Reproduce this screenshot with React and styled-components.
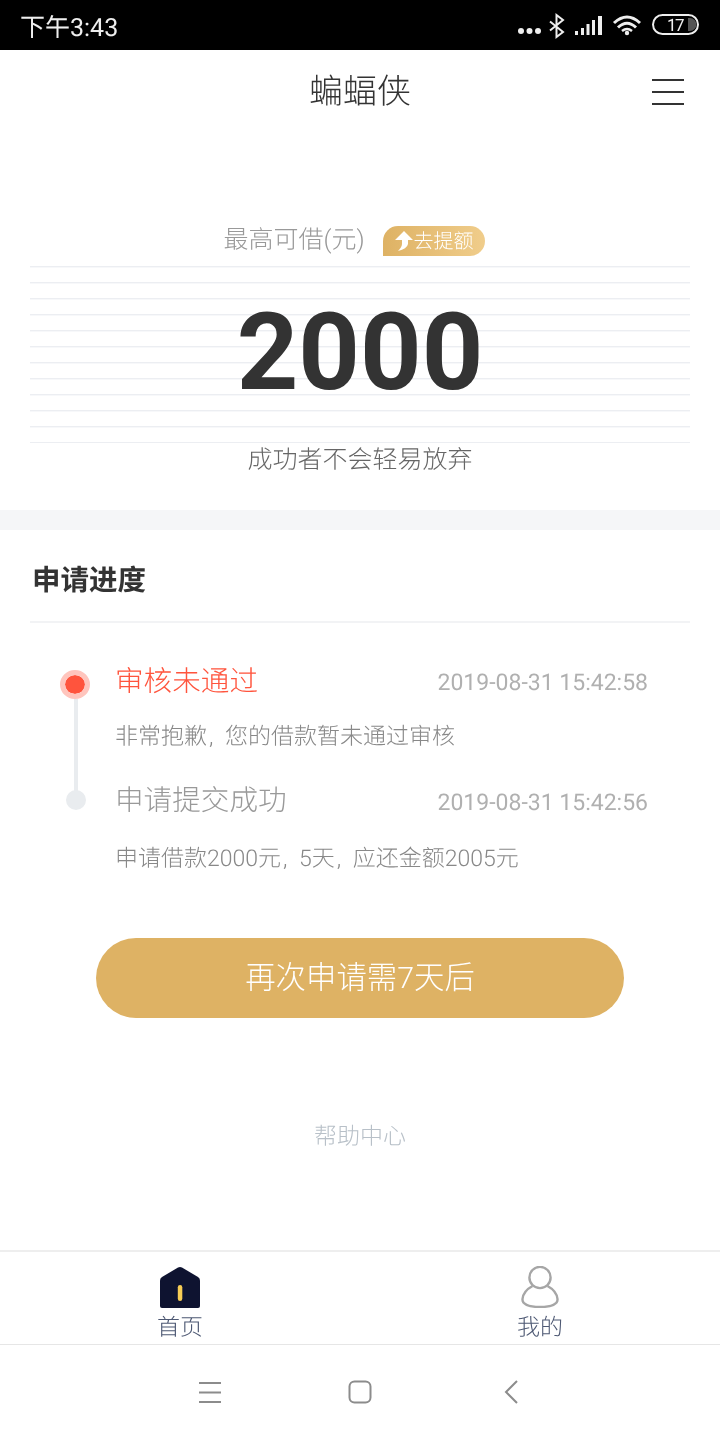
import React from "react";
import styled, { createGlobalStyle } from "styled-components";

const Global = createGlobalStyle`
  html, body { margin: 0; padding: 0; background: #fff; }
  * { box-sizing: border-box; }
  body { font-family: Roboto, "Noto Sans CJK SC", sans-serif; text-rendering: geometricPrecision; }
`;
const Page = styled.div`
  width: 720px; height: 1440px; display: flex; flex-direction: column; background: #fff; overflow: hidden; will-change: transform;
`;
const StatusBar = styled.div`
  height: 50px; background: #000; color: #eee; display: flex; align-items: center; justify-content: space-between;
  padding: 3px 6px 0 20px; flex: none;
`;
const Time = styled.span`font-size: 25px; font-weight: 400; line-height: 47px; margin-top: 3px;`;
const StatusIcons = styled.div`display: flex; align-items: center; margin-top: -3px;`;
const Header = styled.header`
  height: 80px; flex: none; position: relative; display: flex; align-items: center; justify-content: center;
`;
const Title = styled.h1`margin: 0; font-size: 34px; font-weight: 300; color: #333; line-height: 80px; padding-top: 4px;`;
const MenuButton = styled.div`
  position: absolute; right: 36px; top: 29px; width: 32px; height: 26px; display: flex; flex-direction: column; justify-content: space-between;
  span { display: block; height: 2px; background: #333; }
`;
const Hero = styled.section`
  height: 380px; flex: none; padding: 86px 30px 0; display: flex; flex-direction: column; align-items: stretch;
`;
const LabelRow = styled.div`display: flex; justify-content: center; align-items: center; height: 50px; gap: 18px; padding-right: 12px;`;
const Label = styled.span`font-size: 25px; font-weight: 300; color: #999; margin-top: -6px;`;
const Badge = styled.span`
  width: 102px; height: 30px; border-radius: 15px 15px 15px 0; background: linear-gradient(90deg, #deb264, #f0cd8b);
  color: #fff; font-size: 20px; font-weight: 300; display: flex; align-items: center; padding-left: 11px; line-height: 30px;
`;
const Lined = styled.div`
  height: 177px; display: flex; align-items: center; justify-content: center;
  background: repeating-linear-gradient(180deg, #eceef2 0, #eceef2 1px, #f7f8fa 1px, #f7f8fa 2px, #fff 2px, #fff 16px);
`;
const Amount = styled.div`
  font-size: 107.500px; font-weight: 700; color: #333; line-height: 1; font-family: Roboto, sans-serif; margin-top: -2px;
`;
const Motto = styled.div`text-align: center; font-size: 25px; font-weight: 300; color: #666; line-height: 34px; padding-top: 1px;`;
const Band = styled.div`height: 20px; background: #f5f6f8; flex: none;`;
const Section = styled.section`padding: 0 30px; flex: none;`;
const SectionTitle = styled.h2`
  margin: 0; height: 93px; line-height: 102px; padding-left: 2px; font-size: 28.500px; font-weight: 700; color: #333; border-bottom: 2px solid #f2f3f5;
`;
const Timeline = styled.div`padding: 37px 42px 0 30px; display: flex; flex-direction: column;`;
const Step = styled.div`display: flex; height: ${p => p.$h}px;`;
const Marker = styled.div`width: 55px; flex: none; display: flex; flex-direction: column; align-items: center; padding-right: 25px;`;
const Dot = styled.div`
  flex: none; border-radius: 50%; width: ${p => p.$active ? 30 : 20}px; height: ${p => p.$active ? 29 : 20}px;
  margin-top: 10px;
  ${p => p.$active
    ? "border: 5px solid #ffc5bd; background-clip: padding-box; background-color: #ff543d;"
    : "background: #e9ecef; margin-left: 2px;"}
`;
const Rail = styled.div`flex: none; width: 4px; height: 92px; background: #e9ecef; margin-left: 2px;`;
const StepBody = styled.div`flex: 1; min-width: 0; display: flex; flex-direction: column;`;
const StepHead = styled.div`display: flex; justify-content: space-between; align-items: center; height: 40px;`;
const StepTitle = styled.span`font-size: 28.600px; font-weight: 300; color: ${p => p.$active ? "#ff543d" : "#999"}; margin-top: ${p => p.$active ? -2 : -3}px;`;
const StepTime = styled.span`font-size: 23px; font-weight: 400; color: #b0b0b0; margin-top: 4px;`;
const StepDesc = styled.div`font-size: 23px; font-weight: 300; color: #888; margin-top: ${p => p.$mt}px; line-height: 32px;`;
const Comma = styled.span`display: inline-block; width: 18px; padding-left: 2px;`;
const ApplyButton = styled.button`
  display: block; width: 528px; height: 80px; margin: 40px auto 0; border: 0; border-radius: 40px; background: #deb264; color: #fff;
  font: 300 30.400px Roboto, "Noto Sans CJK SC", sans-serif; padding: 0 0 6px; flex: none;
`;
const Help = styled.div`text-align: center; font-size: 23px; font-weight: 300; color: #b8c0c8; line-height: 32px; margin-top: 103px; flex: none;`;
const Spacer = styled.div`flex: 1;`;
const TabBar = styled.nav`
  height: 95px; flex: none; display: flex; border-top: 2px solid #eeeeee; border-bottom: 1px solid #e6e6e6;
`;
const Tab = styled.div`flex: 1; display: flex; flex-direction: column; align-items: center; padding-top: 14px;`;
const TabLabel = styled.span`font-size: 23px; font-weight: 300; color: #4d5873; line-height: 32px; margin-top: 4px;`;
const SysNav = styled.div`
  height: 95px; flex: none; display: flex; align-items: center; justify-content: center; padding-bottom: 1px;
`;
const SysSlot = styled.div`width: 150.500px; display: flex; justify-content: center;`;

export default function App() {
  return (
    <Page>
      <Global />
      <StatusBar>
        <Time>下午3:43</Time>
        <StatusIcons>
          <svg width="200" height="50" viewBox="0 0 200 50">
            <g transform="translate(-514 0)" fill="#eee">
              <circle cx="521" cy="31" r="3" /><circle cx="529.500" cy="31" r="3" /><circle cx="538" cy="31" r="3" />
              <path d="M550 21.500 L563 32 L556.500 37 V15 L563 20 L550 30.500" fill="none" stroke="#eee" strokeWidth="2" />
              <path d="M575 31h3v4h-3zM581 28h3v7h-3zM586.500 24h3v11h-3zM592 20h3v15h-3zM598 16h4v19h-4z" />
              <path d="M614 23 Q627 11 640 23" fill="none" stroke="#eee" strokeWidth="3" />
              <path d="M618 27.500 Q627 19 636 27.500" fill="none" stroke="#eee" strokeWidth="3" />
              <path d="M622 31 Q627 27 632 31" fill="none" stroke="#eee" strokeWidth="2.500" />
              <circle cx="627" cy="33" r="2.200" />
              <rect x="653" y="15" width="45" height="19" rx="9.500" fill="none" stroke="#eee" strokeWidth="2" />
              <path d="M688 18h2a6.500 6.500 0 0 1 0 13h-2z" fill="#555" />
              <text x="667" y="30.500" fontSize="17" fontFamily="Roboto" fontWeight="400" letterSpacing="-1.500">17</text>
            </g>
          </svg>
        </StatusIcons>
      </StatusBar>
      <Header>
        <Title>蝙蝠侠</Title>
        <MenuButton><span /><span /><span /></MenuButton>
      </Header>
      <Hero>
        <LabelRow>
          <Label>最高可借(元)</Label>
          <Badge>
            <svg width="20" height="22" viewBox="0 0 20 22" style={{ flex: "none" }}>
              <path d="M10 1 L19 10 H14 V14 Q13 19 4 21 Q8 17 8 14 V10 H1 Z" fill="#fff" />
            </svg>
            去提额
          </Badge>
        </LabelRow>
        <Lined><Amount>2000</Amount></Lined>
        <Motto>成功者不会轻易放弃</Motto>
      </Hero>
      <Band />
      <Section>
        <SectionTitle>申请进度</SectionTitle>
        <Timeline>
          <Step $h={120}>
            <Marker><Dot $active /><Rail /></Marker>
            <StepBody>
              <StepHead><StepTitle $active>审核未通过</StepTitle><StepTime>2019-08-31 15:42:58</StepTime></StepHead>
              <StepDesc $mt={21}>非常抱歉<Comma>,</Comma>您的借款暂未通过审核</StepDesc>
            </StepBody>
          </Step>
          <Step $h={118}>
            <Marker><Dot /></Marker>
            <StepBody>
              <StepHead><StepTitle>申请提交成功</StepTitle><StepTime>2019-08-31 15:42:56</StepTime></StepHead>
              <StepDesc $mt={23}>申请借款2000元<Comma>,</Comma>5天<Comma>,</Comma>应还金额2005元</StepDesc>
            </StepBody>
          </Step>
        </Timeline>
      </Section>
      <ApplyButton>再次申请需7天后</ApplyButton>
      <Help>帮助中心</Help>
      <Spacer />
      <TabBar>
        <Tab>
          <svg width="40" height="42" viewBox="0 0 40 42">
            <path d="M18 1.500 Q20 .4 22 1.500 L38 11 Q40 12.200 40 14.500 V40 Q40 42 38 42 H2 Q0 42 0 40 V14.500 Q0 12.200 2 11 Z" fill="#0e1330" />
            <rect x="17.800" y="19" width="4.500" height="16" rx="2.200" fill="#f7cd55" />
          </svg>
          <TabLabel>首页</TabLabel>
        </Tab>
        <Tab>
          <svg width="40" height="42" viewBox="0 0 40 42" fill="none" stroke="#a6a6a6" strokeWidth="2.400">
            <circle cx="20" cy="11.500" r="10.600" />
            <path d="M12.500 20 C7 23 3 28 2.500 33 C2 38 8 41 20 41 C32 41 38 38 37.500 33 C37 28 33 23 27.500 20" />
          </svg>
          <TabLabel>我的</TabLabel>
        </Tab>
      </TabBar>
      <SysNav>
        <SysSlot>
          <svg width="22" height="21" viewBox="0 0 22 21" stroke="#8c8c8c" strokeWidth="2"><path d="M0 1h22M0 10.500h22M0 20h22" /></svg>
        </SysSlot>
        <SysSlot>
          <svg width="24" height="24" viewBox="0 0 24 24" fill="none" stroke="#8c8c8c" strokeWidth="2"><rect x="1.500" y="1.500" width="21" height="21" rx="5" /></svg>
        </SysSlot>
        <SysSlot>
          <svg width="14" height="24" viewBox="0 0 14 24" fill="none" stroke="#8c8c8c" strokeWidth="2"><path d="M13 1 L2 12 L13 23" /></svg>
        </SysSlot>
      </SysNav>
    </Page>
  );
}
